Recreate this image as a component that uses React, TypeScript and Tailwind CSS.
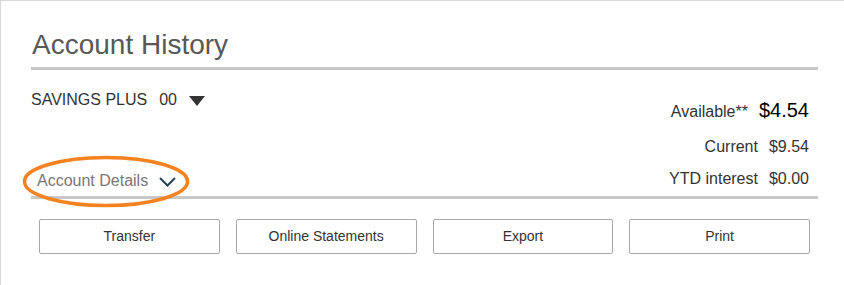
export default function App() {
  const font = { fontFamily: '"Liberation Sans", Arial, sans-serif' };
  return (
    <div
      className="relative w-[844px] h-[285px] bg-white border-t border-l border-[#d9d9d9] pl-[30px] pr-[26px] overflow-hidden"
      style={font}
    >
      <div className="pt-[28px] pb-[6px] border-b-[3px] border-[#c8c8c8]">
        <h1 className="text-[28px] leading-[32px] text-[#585858] pl-[1px]">Account History</h1>
      </div>

      <div className="flex justify-between h-[129px] border-b-[3px] border-[#c8c8c8]">
        <div className="flex flex-col justify-between pt-[18px] pb-[3px]">
          <div className="flex items-center text-[16px] leading-[24px] text-[#333]">
            <span>SAVINGS PLUS</span>
            <span className="ml-[12px]">00</span>
            <svg width="16" height="10" viewBox="0 0 16 10" className="ml-[12px] mt-[1px]">
              <polygon points="0,0 16,0 8,10" fill="#333" />
            </svg>
          </div>
          <div className="flex items-center pl-[6px] text-[16px] leading-[24px] text-[#777]">
            <span>Account Details</span>
            <svg width="17" height="10" viewBox="0 0 17 10" className="ml-[11px] mt-[1px]">
              <polyline points="1,1 8.5,8.5 16,1" fill="none" stroke="#2b3f55" strokeWidth="2" />
            </svg>
          </div>
        </div>

        <div className="flex flex-col items-end pt-[28px] pr-[9px] text-[#333]">
          <div className="flex items-baseline text-[20px] leading-[24px]">
            <span className="text-[16px]">Available**</span>
            <span className="ml-[11px] text-black">$4.54</span>
          </div>
          <div className="flex items-baseline mt-[11px] text-[16px] leading-[24px]">
            <span>Current</span>
            <span className="ml-[11px]">$9.54</span>
          </div>
          <div className="flex items-baseline mt-[8px] text-[16px] leading-[24px]">
            <span>YTD interest</span>
            <span className="ml-[11px]">$0.00</span>
          </div>
        </div>
      </div>

      <div className="grid grid-cols-4 gap-4 mx-[8px] mt-[20px]">
        {["Transfer", "Online Statements", "Export", "Print"].map((t) => (
          <button
            key={t}
            className="h-[35px] border border-[#a8a8a8] rounded-[2px] bg-white text-[14px] text-[#333]"
            style={font}
          >
            {t}
          </button>
        ))}
      </div>

      <svg
        className="absolute left-[21px] top-[154px] pointer-events-none"
        width="169"
        height="53"
        viewBox="0 0 169 53"
      >
        <ellipse cx="84" cy="26.5" rx="81.5" ry="24" fill="none" stroke="#f58220" strokeWidth="3.5" />
      </svg>
    </div>
  );
}
